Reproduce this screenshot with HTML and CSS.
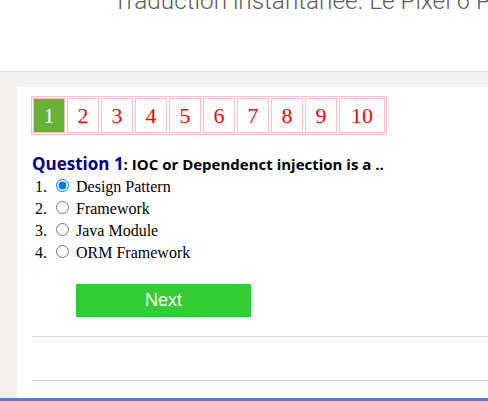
FILE: index.html
```html
<!DOCTYPE html>
<html>
<head>
<meta charset="utf-8">
<link rel="stylesheet" href="styles.css">
</head>
<body>
<header class="top">
  <div class="headline">Traduction instantanée. Le Pixel 6 Pro : la meilleure</div>
</header>
<main class="page">
  <section class="panel">
    <nav class="pager">
      <a class="pg active">1</a>
      <a class="pg">2</a>
      <a class="pg">3</a>
      <a class="pg">4</a>
      <a class="pg">5</a>
      <a class="pg">6</a>
      <a class="pg">7</a>
      <a class="pg">8</a>
      <a class="pg">9</a>
      <a class="pg wide">10</a>
    </nav>
    <div class="question"><span class="qnum">Question 1</span>: IOC or Dependenct injection is a ..</div>
    <ol class="answers">
      <li><input type="radio" name="q1" checked> Design Pattern</li>
      <li><input type="radio" name="q1"> Framework</li>
      <li><input type="radio" name="q1"> Java Module</li>
      <li><input type="radio" name="q1"> ORM Framework</li>
    </ol>
    <button class="next">Next</button>
    <hr class="rule first">
    <hr class="rule second">
  </section>
</main>
<div class="bottombar"></div>
</body>
</html>
```
FILE: styles.css
```css
html, body {
  margin: 0;
  padding: 0;
  height: 100%;
  overflow: hidden;
}
body {
  font-family: "Liberation Serif", serif;
  font-size: 16px;
  background: #fff;
  display: flex;
  flex-direction: column;
}
.top {
  height: 71px;
  overflow: hidden;
  background: #fff;
  flex: none;
}
.headline {
  margin-top: -12px;
  padding-left: 113px;
  font-family: Roboto, sans-serif;
  font-weight: 300;
  font-size: 24.3px;
  line-height: 26px;
  color: #5c5c5c;
  white-space: nowrap;
}
.page {
  flex: 1;
  background: #f5f1f0;
  border-top: 1px solid #e2e0e0;
  padding: 15px 0 0 17px;
  display: flex;
  min-height: 0;
}
.panel {
  flex: 1;
  background: #fff;
  padding: 9px 0 0 14px;
  display: flex;
  flex-direction: column;
  align-items: flex-start;
}
.pager {
  display: flex;
  border: 1px solid #ffc0cb;
}
.pg {
  box-sizing: border-box;
  width: 32px;
  height: 35px;
  margin: 1px;
  border: 1px solid #ffc0cb;
  display: flex;
  align-items: center;
  justify-content: center;
  font-family: "Liberation Serif", serif;
  font-size: 22px;
  color: #ff0000;
}
.pg.wide {
  width: 46px;
}
.pg.active {
  background: #65b234;
  color: #fff;
}
.question {
  margin-top: 18px;
  line-height: 22px;
  font-family: "Open Sans", sans-serif;
  font-weight: 700;
  font-size: 15px;
  color: #000;
  padding-left: 1px;
}
.qnum {
  color: #000080;
  font-size: 17px;
}
.answers {
  margin: 1px 0 0 0;
  padding-left: 20px;
}
.answers li {
  height: 22px;
  line-height: 22px;
}
.next {
  margin: 20px 0 0 45px;
  width: 175px;
  height: 33px;
  border: none;
  background: #32cd32;
  color: #fff;
  font-family: "Liberation Sans", sans-serif;
  font-size: 18px;
  padding: 0;
}
.rule {
  align-self: stretch;
  margin: 0 0 0 1px;
  border: none;
  border-top: 1px solid #d6d6d6;
  height: 0;
}
.rule.first {
  margin-top: 19px;
}
.rule.second {
  margin-top: 43px;
}
.bottombar {
  flex: none;
  height: 3px;
  background: #4a7be0;
}
```
